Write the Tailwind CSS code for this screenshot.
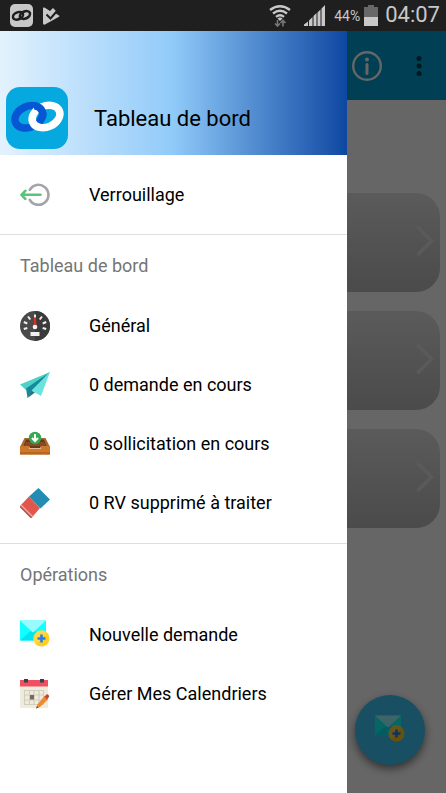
<!DOCTYPE html>
<html lang="fr">
<head>
<meta charset="utf-8">
<meta name="viewport" content="width=device-width, initial-scale=1">
<title>Tableau de bord</title>
<script src="https://cdn.jsdelivr.net/npm/@tailwindcss/browser@4"></script>
</head>
<body class="relative flex min-h-screen flex-col overflow-x-hidden bg-white font-['Roboto',sans-serif] text-lg text-black">

<svg class="hidden" aria-hidden="true">
  <symbol id="mail-add" viewBox="0 0 30 30">
    <path fill="#1ff" d="M0 .500h26v20H0z"/>
    <path fill="#00e5f0" d="M0 20.500 10 11.500h6l10 9z"/>
    <path fill="#99fbff" d="M0 .500h26L13 12.500z"/>
    <circle cx="21.500" cy="18.500" r="8" fill="#ffce1f"/>
    <path fill="#ffdf60" d="M16 24.500a8 8 0 0 1 11-12z" opacity=".6"/>
    <path stroke="#2b7de9" stroke-width="2.600" d="M21.500 14.500v8M17.500 18.500h8"/>
  </symbol>
  <symbol id="chevron" viewBox="0 0 18 32">
    <path fill="none" stroke="#e2e2e2" stroke-width="3.500" d="m1.500 2 14 14-14 14"/>
  </symbol>
</svg>

<div class="z-20 flex h-[31px] items-center bg-[#1f1f1f] pr-[6px] pl-[10px] text-[#c8c8c8]">
  <svg class="size-[23px]" viewBox="0 0 23 23" aria-hidden="true">
    <rect width="23" height="23" rx="5" fill="#c8c8c8"/>
    <g fill="none" stroke="#1f1f1f" stroke-width="2.600">
      <ellipse cx="8" cy="11.800" rx="5.300" ry="3.500" transform="rotate(-24 8 11.800)"/>
      <ellipse cx="15" cy="11" rx="5.300" ry="3.500" transform="rotate(-24 15 11)"/>
    </g>
  </svg>
  <svg class="ml-[10px] h-[18px] w-[17px]" viewBox="0 0 17 18" aria-hidden="true">
    <path fill="#c8c8c8" d="M0 1.500Q0 0 1.500.500L7 4l3-3 3 3-1 2 4 2.500q1 .500 0 1.200L2 17.500Q0 18 0 16.500z"/>
    <path fill="none" stroke="#1f1f1f" stroke-width="2" d="m3.500 7.500 4 4L14 4"/>
  </svg>
  <div class="flex-1"></div>
  <svg class="h-6 w-[22px]" viewBox="0 0 22 24" aria-hidden="true">
    <g fill="none" stroke="#c8c8c8" stroke-width="2.300">
      <path d="M1 6q10-7.500 20 0M4 9.500q7-5.500 14 0M7 12.800q4-3.200 8 0"/>
    </g>
    <path fill="#c8c8c8" d="m8.500 14.500 2.500 2.500 2.500-2.500q-2.500-2-5 0z"/>
    <path fill="none" stroke="#777" stroke-width="1.600" d="M8.500 16v6M6 19.500 8.500 22l2.500-2.500M14 22.500v-6M11.500 19l2.500-2.500 2.500 2.500"/>
  </svg>
  <svg class="ml-[13px] h-[21px] w-[21px]" viewBox="0 0 21 21" aria-hidden="true">
    <path fill="#c8c8c8" d="M0 21v-1.500L4 16.500v4.500zM5 21v-5.500L8.500 12v9zM9.500 21v-10l3-3V21zM13.500 21V7.500l3-3V21zM17.500 21V3.500L21 0v21z"/>
  </svg>
  <span class="ml-[9px] text-sm">44%</span>
  <svg class="ml-[4px] h-[21px] w-[14px]" viewBox="0 0 14 21" aria-hidden="true">
    <path fill="#686868" d="M4 0h6v2h4v11H0V2h4z"/>
    <path fill="#c8c8c8" d="M0 12h14v9H0z"/>
  </svg>
  <span class="ml-[7px] text-[22px]">04:07</span>
</div>

<main class="flex flex-1 flex-col">
  <header class="flex h-[69px] items-center justify-end gap-8 bg-[#009dd2] pr-[22px]">
    <button type="button" aria-label="Informations">
      <svg class="size-[30px]" viewBox="0 0 30 30" aria-hidden="true">
        <circle cx="15" cy="15" r="13.800" fill="none" stroke="#fff" stroke-width="2.400"/>
        <circle cx="15" cy="8.500" r="2" fill="#fff"/>
        <path stroke="#fff" stroke-width="3" stroke-linecap="round" d="M15 13.500v9"/>
      </svg>
    </button>
    <button type="button" aria-label="Plus d’options">
      <svg class="h-[20px] w-[10px]" viewBox="0 0 10 20" aria-hidden="true">
        <g fill="#003c50"><circle cx="5" cy="2.500" r="2.500"/><circle cx="5" cy="10" r="2.500"/><circle cx="5" cy="17.500" r="2.500"/></g>
      </svg>
    </button>
  </header>
  <div class="flex flex-col gap-[19px] px-[6px] pt-[93px]">
    <button type="button" aria-label="Demandes" class="flex h-[99px] items-center justify-end rounded-3xl bg-linear-to-b from-[#e3e3e3] to-[#bbb] pr-[6px] pb-1"><svg class="h-8 w-[18px]" aria-hidden="true"><use href="#chevron"/></svg></button>
    <button type="button" aria-label="Sollicitations" class="flex h-[99px] items-center justify-end rounded-3xl bg-linear-to-b from-[#e3e3e3] to-[#bbb] pr-[6px] pb-1"><svg class="h-8 w-[18px]" aria-hidden="true"><use href="#chevron"/></svg></button>
    <button type="button" aria-label="Rendez-vous" class="flex h-[99px] items-center justify-end rounded-3xl bg-linear-to-b from-[#e3e3e3] to-[#bbb] pr-[6px] pb-1"><svg class="h-8 w-[18px]" aria-hidden="true"><use href="#chevron"/></svg></button>
  </div>
</main>

<button type="button" aria-label="Nouvelle demande" class="absolute right-[21px] bottom-[28px] flex size-[70px] items-center justify-center rounded-full bg-[#3cc6f7] shadow-[0_4px_8px_rgb(0_0_0/0.5)]">
  <svg class="size-[30px]" aria-hidden="true"><use href="#mail-add"/></svg>
</button>

<div class="absolute inset-x-0 top-[31px] bottom-0 bg-black/60"></div>

<aside class="absolute top-[31px] bottom-0 left-0 flex w-[347px] flex-col bg-white">
  <div class="flex h-[124px] items-end gap-[26px] bg-linear-to-r from-[#e3f2fd] via-[#90caf9] to-[#0d47a1] px-[6px] pb-[6px]">
    <svg class="size-[62px]" viewBox="0 0 62 62" aria-hidden="true">
      <clipPath id="overlap"><path d="M28 8h16v24H28z"/></clipPath>
      <rect width="62" height="62" rx="14" fill="#06a9df"/>
      <g fill="none" stroke-width="7.500">
        <ellipse cx="22.800" cy="29.800" rx="14.500" ry="10.500" stroke="#0757d5" transform="rotate(-24 22.800 29.800)"/>
        <ellipse cx="40" cy="29.500" rx="14.500" ry="10.500" stroke="#fff" transform="rotate(-24 40 29.500)"/>
        <g clip-path="url(#overlap)">
          <ellipse cx="22.800" cy="29.800" rx="14.500" ry="10.500" stroke="#0757d5" transform="rotate(-24 22.800 29.800)"/>
        </g>
      </g>
    </svg>
    <h1 class="mb-[14px] text-[22px] leading-8">Tableau de bord</h1>
  </div>

  <nav aria-label="Menu principal">
    <div class="border-b border-[#dedede] py-[10px]">
      <a href="#verrouillage" class="flex h-[59px] items-center gap-[39px] px-5">
        <svg class="size-[30px]" viewBox="0 0 30 30" aria-hidden="true">
          <path fill="none" stroke="#a3a4ab" stroke-width="2.600" stroke-linecap="round" d="M9.800 9.800a10 10 0 1 1 0 10"/>
          <path fill="none" stroke="#5bc47a" stroke-width="2.600" stroke-linecap="round" stroke-linejoin="round" d="M20.500 14.800H2M5.300 10.800 1.500 14.800l3.800 4"/>
        </svg>
        <span>Verrouillage</span>
      </a>
    </div>

    <div class="border-b border-[#dedede] pb-[11px]">
      <h2 class="flex h-[61px] items-center px-5 text-[#757575]">Tableau de bord</h2>
      <a href="#general" class="flex h-[59px] items-center gap-[39px] px-5">
        <svg class="size-[30px]" viewBox="0 0 30 30" aria-hidden="true">
          <circle cx="15" cy="15" r="15" fill="#4a4a4a"/>
          <path fill="#3b3b3b" d="M15 0a15 15 0 0 1 0 30z"/>
          <g stroke="#f0f0f0" stroke-width="2">
            <path d="m3.800 18 3.500-1M3.800 11l3.500 1.500M8 5.500l2.300 3M22 5.500l-2.300 3M26.200 11l-3.500 1.500M26.200 18l-3.500-1M15 3.500v3"/>
          </g>
          <path fill="#e02b20" d="M14 7h2l.500 8h-3z"/>
          <circle cx="15" cy="16" r="2.300" fill="#f5f5f5"/>
          <path fill="#f0f0f0" d="M10.500 21h9v4h-9z"/>
        </svg>
        <span>Général</span>
      </a>
      <a href="#demandes" class="flex h-[59px] items-center gap-[39px] px-5">
        <svg class="size-[30px]" viewBox="0 0 30 30" aria-hidden="true">
          <path fill="#4ed1c8" d="M0 14.500 30 2 6 20z"/>
          <path fill="#16899a" d="M6 18.500 30 2 11.500 21.500 7.500 28z"/>
          <path fill="#24737e" d="m11.500 20.500 3.500 2-7.500 5.500z"/>
          <path fill="#6ae3dc" d="M30 2 11.500 20.500 21 26z"/>
        </svg>
        <span>0 demande en cours</span>
      </a>
      <a href="#sollicitations" class="flex h-[59px] items-center gap-[39px] px-5">
        <svg class="size-[30px]" viewBox="0 0 30 30" aria-hidden="true">
          <path fill="#a9682f" d="M4.500 9h21L30 18H0z"/>
          <path fill="#68381d" d="M6 10.500h18l2.500 6.500h-23z"/>
          <path fill="#854b24" d="M6 13h18l2 4H4z"/>
          <path fill="#cd772a" d="M0 17h9v2.500h12V17h9v8.500H0z"/>
          <path fill="#b8651f" d="M0 23h30v2.500H0z"/>
          <path fill="#68381d" d="M9.500 17h11v2h-11z"/>
          <circle cx="15" cy="9" r="6.200" fill="#35a852"/>
          <path fill="none" stroke="#fff" stroke-width="2" d="M15 5v7M12 9l3 3 3-3"/>
        </svg>
        <span>0 sollicitation en cours</span>
      </a>
      <a href="#rv-supprimes" class="flex h-[59px] items-center gap-[39px] px-5">
        <svg class="size-[30px]" viewBox="0 0 30 30" aria-hidden="true">
          <path fill="#e2574c" d="m9 8.500 11 11.500-8.500 10L0 18z"/>
          <path fill="#238cb3" d="M18.500 0 30 11.500 20.500 20.500 9 8.500z"/>
          <path fill="none" stroke="#f1aaa5" stroke-width="1.300" d="m1 17 12 12"/>
          <path fill="none" stroke="#b94b42" stroke-width="1.300" d="m0 18.500 11.500 11.500"/>
        </svg>
        <span>0 RV supprimé à traiter</span>
      </a>
    </div>

    <div>
      <h2 class="flex h-[61px] items-center px-5 text-[#757575]">Opérations</h2>
      <a href="#nouvelle-demande" class="flex h-[59px] items-center gap-[39px] px-5">
        <svg class="size-[30px]" aria-hidden="true"><use href="#mail-add"/></svg>
        <span>Nouvelle demande</span>
      </a>
      <a href="#calendriers" class="flex h-[59px] items-center gap-[39px] px-5">
        <svg class="size-[30px]" viewBox="0 0 30 30" aria-hidden="true">
          <path fill="#efebdf" d="M0 1h28v28H0z"/>
          <path fill="#f0505f" d="M0 1h28v6.500H0z"/>
          <path fill="#2d4356" d="M4 0h4v3.500H4zM20 0h4v3.500h-4z"/>
          <path fill="none" stroke="#d3cfbd" stroke-width="1.200" d="M4.500 11.500h19v14h-19zM4.500 16h19M4.500 21h19M9.500 11.500v14M14 11.500v14M19 11.500v14"/>
          <path fill="#776858" d="M10 16h4v4.500h-4z"/>
          <path fill="#ef8b2c" d="m24.500 17 3.500 3.500-8 7.500-4 1.500 1.500-4z"/>
          <path fill="#c9423a" d="m24.500 17.500 2-2q1-.500 2 .500t.500 2L27 20.500z"/>
          <path fill="#5a4a42" d="m17 27 1.500 1.500-2.500 1z"/>
        </svg>
        <span>Gérer Mes Calendriers</span>
      </a>
    </div>
  </nav>
</aside>
</body>
</html>
